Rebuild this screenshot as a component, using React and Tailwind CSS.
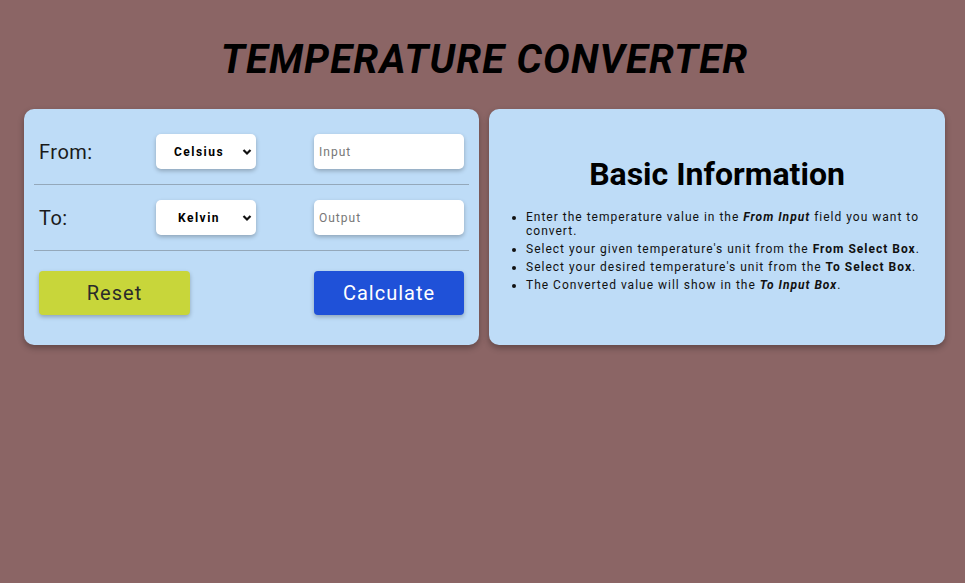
import React, { useState } from "react";

const Chevron = () => (
  <svg
    width="10"
    height="10"
    viewBox="0 0 10 10"
    className="pointer-events-none absolute right-[4px] top-1/2 -translate-y-1/2"
  >
    <path d="M1.5 3 L5 6.5 L8.5 3" stroke="#111" strokeWidth="2.2" fill="none" />
  </svg>
);

const UnitSelect = ({ value, onChange }) => (
  <div className="relative w-[100px] h-[35px]">
    <select
      value={value}
      onChange={(e) => onChange(e.target.value)}
      className="appearance-none w-full h-full bg-white rounded-[5px] shadow-[0_2px_4px_rgba(0,0,0,0.25)] pl-[4px] pr-[18px] text-center text-[12px] font-bold tracking-[1.5px] text-black outline-none"
    >
      <option>Celsius</option>
      <option>Kelvin</option>
      <option>Fahrenheit</option>
    </select>
    <Chevron />
  </div>
);

const App = () => {
  const [from, setFrom] = useState("Celsius");
  const [to, setTo] = useState("Kelvin");
  const [input, setInput] = useState("");
  const [output, setOutput] = useState("");

  const calculate = () => {
    const v = parseFloat(input);
    if (isNaN(v)) return;
    let c = v;
    if (from === "Kelvin") c = v - 273.15;
    if (from === "Fahrenheit") c = ((v - 32) * 5) / 9;
    let r = c;
    if (to === "Kelvin") r = c + 273.15;
    if (to === "Fahrenheit") r = (c * 9) / 5 + 32;
    setOutput(String(Math.round(r * 100) / 100));
  };

  const reset = () => {
    setInput("");
    setOutput("");
  };

  return (
    <div
      className="min-h-[583px] bg-[#8b6565] pl-[24px] pr-[20px] pt-[36px]"
      style={{ fontFamily: "Roboto, 'Liberation Sans', sans-serif" }}
    >
      <h1 className="text-center text-[40px] leading-[47px] font-bold italic tracking-[1.2px] text-black">
        TEMPERATURE CONVERTER
      </h1>
      <div className="mt-[26px] flex gap-[10px]">
        <div className="w-[455px] shrink-0 bg-[#bedcf7] rounded-[10px] shadow-[0_3px_6px_rgba(0,0,0,0.3)] px-[10px] pt-[25px] pb-[30px]">
          <div className="flex items-center px-[5px]">
            <span className="w-[117px] text-[20px] tracking-[0.5px] text-[#1a1a1a]">From:</span>
            <UnitSelect value={from} onChange={setFrom} />
            <input
              value={input}
              onChange={(e) => setInput(e.target.value)}
              placeholder="Input"
              className="ml-[58px] w-[150px] h-[35px] bg-white rounded-[5px] shadow-[0_2px_4px_rgba(0,0,0,0.25)] px-[5px] text-[12px] tracking-[1px] placeholder:text-[#777] outline-none"
            />
          </div>
          <div className="my-[15px] border-t border-[#94a8ba]" />
          <div className="flex items-center px-[5px]">
            <span className="w-[117px] text-[20px] tracking-[0.5px] text-[#1a1a1a]">To:</span>
            <UnitSelect value={to} onChange={setTo} />
            <input
              value={output}
              readOnly
              placeholder="Output"
              className="ml-[58px] w-[150px] h-[35px] bg-white rounded-[5px] shadow-[0_2px_4px_rgba(0,0,0,0.25)] px-[5px] text-[12px] tracking-[1px] placeholder:text-[#777] outline-none"
            />
          </div>
          <div className="mt-[15px] mb-[20px] border-t border-[#94a8ba]" />
          <div className="flex items-center px-[5px]">
            <button
              onClick={reset}
              className="w-[151px] h-[44px] bg-[#c8d63a] rounded-[4px] shadow-[0_2px_4px_rgba(0,0,0,0.25)] text-[20px] tracking-[1px] text-[#2a2a2a]"
            >
              Reset
            </button>
            <button
              onClick={calculate}
              className="ml-auto w-[150px] h-[44px] bg-[#1f51d8] rounded-[4px] shadow-[0_2px_4px_rgba(0,0,0,0.25)] text-[20px] tracking-[1px] text-white"
            >
              Calculate
            </button>
          </div>
        </div>

        <div className="flex-1 bg-[#bedcf7] rounded-[10px] shadow-[0_3px_6px_rgba(0,0,0,0.3)] px-[20px] pt-[46px]">
          <h2 className="text-center text-[32px] leading-[38px] font-bold text-black">
            Basic Information
          </h2>
          <ul className="mt-[17px] list-disc pl-[17px] text-[12px] leading-[14px] tracking-[1px] text-[#111]">
            <li className="mb-[4px]">
              Enter the temperature value in the <b><i>From Input</i></b> field you want to convert.
            </li>
            <li className="mb-[4px]">
              Select your given temperature's unit from the <b>From Select Box</b>.
            </li>
            <li className="mb-[4px]">
              Select your desired temperature's unit from the <b>To Select Box</b>.
            </li>
            <li className="mb-[4px]">
              The Converted value will show in the <b><i>To Input Box</i></b>.
            </li>
          </ul>
        </div>
      </div>
    </div>
  );
};

export default App;
